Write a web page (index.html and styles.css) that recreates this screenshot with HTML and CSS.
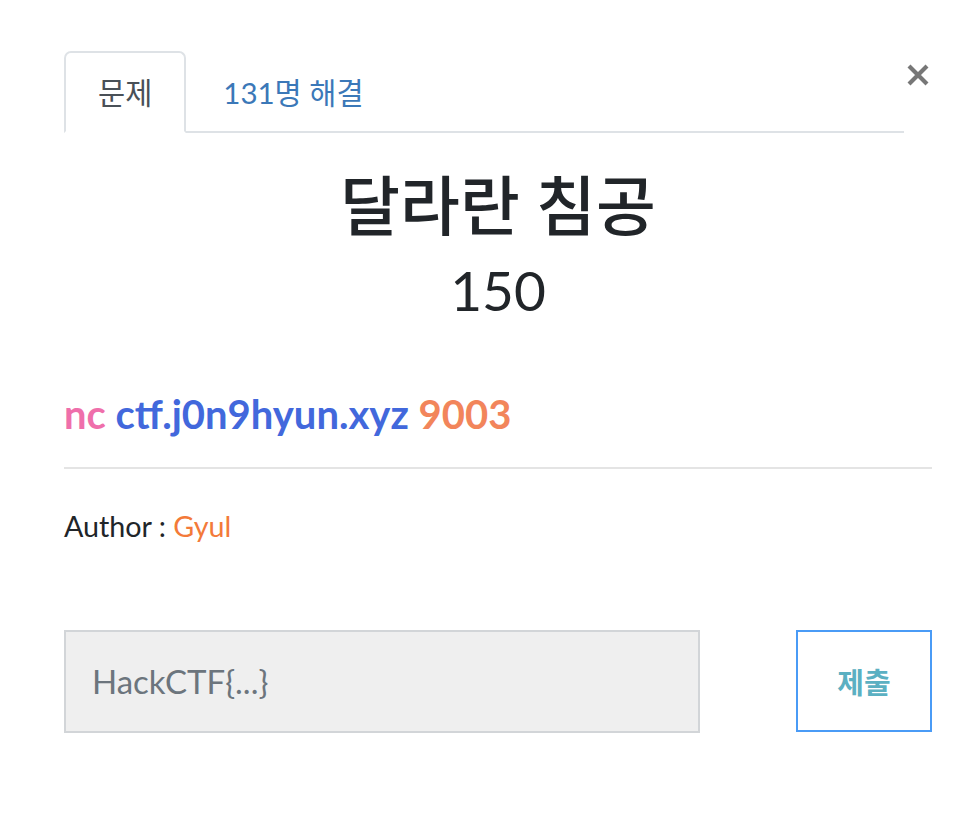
FILE: index.html
```html
<!DOCTYPE html>
<html lang="ko">
<head>
<meta charset="utf-8">
<link rel="stylesheet" href="styles.css">
</head>
<body>
<div class="modal">
  <div class="top">
    <ul class="tabs">
      <li class="tab active">문제</li>
      <li class="tab link">131명 해결</li>
    </ul>
    <button class="close" aria-label="닫기">
      <svg width="24" height="24" viewBox="0 0 24 24"><path d="M3 3 L21 21 M21 3 L3 21" stroke="#777" stroke-width="4.2" stroke-linecap="butt"/></svg>
    </button>
  </div>
  <h2 class="title">달라란 침공</h2>
  <h4 class="value">150</h4>
  <h3 class="cmd"><span class="pink">nc</span> <span class="blue">ctf.j0n9hyun.xyz</span> <span class="coral">9003</span></h3>
  <hr class="rule">
  <p class="author">Author : <span class="orange">Gyul</span></p>
  <form class="submit-row">
    <div class="input">HackCTF{...}</div>
    <div class="btn">제출</div>
  </form>
</div>
</body>
</html>
```
FILE: styles.css
```css
html, body {
  margin: 0;
  padding: 0;
  background: #fff;
}
body {
  font-family: Lato, "Noto Sans CJK KR", sans-serif;
  color: #212529;
}
.modal {
  width: 868px;
  padding: 51px 0 0 64px;
}
.top {
  display: flex;
  align-items: flex-start;
}
.tabs {
  list-style: none;
  margin: 0;
  padding: 0;
  display: flex;
  flex-shrink: 0;
  width: 840px;
  border-bottom: 2px solid #dee2e6;
  height: 80px;
}
.tab {
  font-size: 29.5px;
  line-height: 80px;
  height: 80px;
}
.tab.active {
  color: #495057;
  padding: 0 32px;
  border: 2px solid #dee2e6;
  border-bottom-color: #fff;
  border-radius: 7px 7px 0 0;
  height: 78px;
  line-height: 80px;
  margin-bottom: -2px;
  background: #fff;
}
.tab.link {
  color: #3b78b8;
  padding: 0 0 0 37px;
  line-height: 84px;
}
.close {
  margin: 10px 0 0 0;
  width: 28px;
  height: 28px;
  padding: 2px;
  border: 0;
  background: none;
}
.title {
  margin: 32px 0 0;
  text-align: center;
  font-size: 65px;
  font-weight: 500;
  line-height: 80px;
}
.value {
  margin: 8px 0 0;
  text-align: center;
  font-size: 55px;
  font-weight: 400;
  line-height: 74px;
}
.cmd {
  margin: 62px 0 0;
  font-size: 40px;
  font-weight: 700;
  line-height: 50px;
}
.pink { color: #ef6fab; }
.blue { color: #4268dc; }
.coral { color: #f2855b; }
.orange { color: #f37a39; }
.rule {
  margin: 28px 0 0;
  border: 0;
  border-top: 2px solid #e4e4e4;
}
.author {
  margin: 37px 0 0;
  font-size: 28.7px;
  line-height: 40px;
}
.submit-row {
  display: flex;
  justify-content: space-between;
  margin-top: 84px;
}
.input {
  box-sizing: border-box;
  width: 636px;
  height: 103px;
  background: #efefef;
  border: 2px solid #d2d5d8;
  color: #6c757d;
  font-size: 33px;
  line-height: 99px;
  padding-left: 26px;
}
.btn {
  box-sizing: border-box;
  width: 136px;
  height: 102px;
  border: 2px solid #4a9bf6;
  color: #5bb0c2;
  font-size: 29px;
  font-weight: 700;
  display: flex;
  align-items: center;
  justify-content: center;
}
```
